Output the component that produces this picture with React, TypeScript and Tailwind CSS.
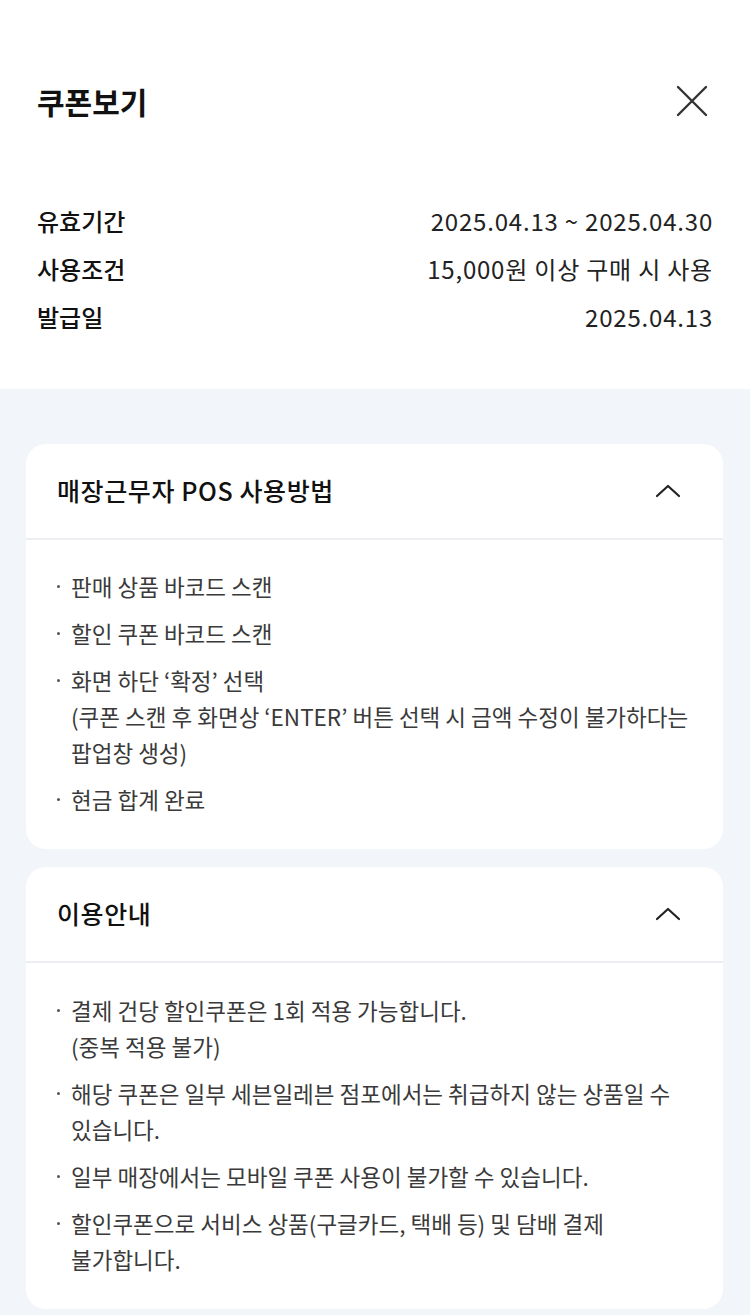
import React from "react";

const font = { fontFamily: '"Noto Sans CJK KR", "Noto Sans", sans-serif' };

type Item = string[];

const posItems: Item[] = [
  ["판매 상품 바코드 스캔"],
  ["할인 쿠폰 바코드 스캔"],
  [
    "화면 하단 ‘확정’ 선택",
    "(쿠폰 스캔 후 화면상 ‘ENTER’ 버튼 선택 시 금액 수정이 불가하다는",
    "팝업창 생성)",
  ],
  ["현금 합계 완료"],
];

const guideItems: Item[] = [
  ["결제 건당 할인쿠폰은 1회 적용 가능합니다.", "(중복 적용 불가)"],
  ["해당 쿠폰은 일부 세븐일레븐 점포에서는 취급하지 않는 상품일 수", "있습니다."],
  ["일부 매장에서는 모바일 쿠폰 사용이 불가할 수 있습니다."],
  ["할인쿠폰으로 서비스 상품(구글카드, 택배 등) 및 담배 결제", "불가합니다."],
];

function ChevronUp() {
  return (
    <svg width="26" height="16" viewBox="0 0 26 16" fill="none">
      <path d="M2 13 L13 3 L24 13" stroke="#222" strokeWidth="2.2" strokeLinecap="round" strokeLinejoin="round" />
    </svg>
  );
}

function CloseIcon() {
  return (
    <svg width="34" height="34" viewBox="0 0 34 34" fill="none">
      <path d="M3 3 L31 31 M31 3 L3 31" stroke="#333" strokeWidth="2.4" strokeLinecap="round" />
    </svg>
  );
}

function Section({ title, items, topPad }: { title: string; items: Item[]; topPad: string }) {
  return (
    <div className="bg-white rounded-[20px] overflow-hidden">
      <div className="h-[96px] flex items-center justify-between pl-[31px] pr-[42px] border-b-2 border-[#eceef1]">
        <span className="text-[25px] font-medium text-[#111] tracking-[0.6px]">{title}</span>
        <ChevronUp />
      </div>
      <div className={`pl-[31px] pr-[24px] pb-[32px] flex flex-col gap-[11px] ${topPad}`}>
        {items.map((lines, i) => (
          <div key={i} className="flex">
            <div className="w-[14px] h-[36px] flex items-center shrink-0">
              <span className="block w-[3px] h-[3px] rounded-full bg-[#555]" />
            </div>
            <div className="flex flex-col">
              {lines.map((l, j) => (
                <span key={j} className="block whitespace-nowrap text-[22.5px] leading-[36px] text-[#3a3a3a]">
                  {l}
                </span>
              ))}
            </div>
          </div>
        ))}
      </div>
    </div>
  );
}

export default function App() {
  const rows = [
    ["유효기간", "2025.04.13 ~ 2025.04.30"],
    ["사용조건", "15,000원 이상 구매 시 사용"],
    ["발급일", "2025.04.13"],
  ];
  return (
    <div style={font} className="w-[750px] min-h-[1315px] bg-[#f2f5fa]">
      <div className="bg-white px-[37px] pt-[81px] pb-[48px]">
        <div className="h-[40px] flex items-center justify-between">
          <h1 className="text-[30px] font-bold text-[#111]">쿠폰보기</h1>
          <div className="mr-[4px]">
            <CloseIcon />
          </div>
        </div>
        <div className="mt-[76px] flex flex-col">
          {rows.map(([k, v]) => (
            <div key={k} className="h-[48px] flex items-center justify-between">
              <span className="text-[24px] font-medium text-[#111]">{k}</span>
              <span className="text-[24px] text-[#222] tracking-[0.8px]">{v}</span>
            </div>
          ))}
        </div>
      </div>
      <div className="pt-[55px] pl-[26px] pr-[27px] pb-[4px] flex flex-col gap-[18px]">
        <Section title="매장근무자 POS 사용방법" items={posItems} topPad="pt-[28px]" />
        <Section title="이용안내" items={guideItems} topPad="pt-[29px]" />
      </div>
    </div>
  );
}
